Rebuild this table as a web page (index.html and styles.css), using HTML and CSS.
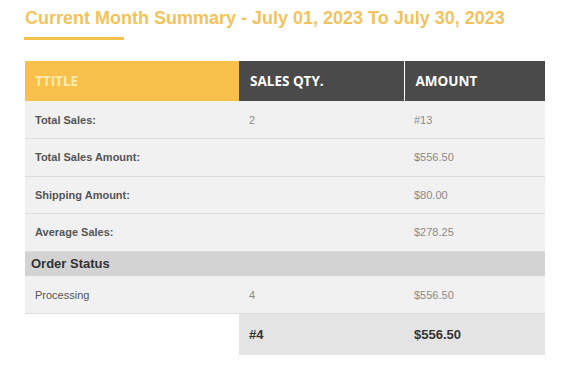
FILE: index.html
```html
<!DOCTYPE html>
<html>
<head>
<meta charset="utf-8">
<link rel="stylesheet" href="styles.css">
</head>
<body>
<div class="wrap">
  <h2 class="title">Current Month Summary - July 01, 2023 To July 30, 2023</h2>
  <div class="underline"></div>
  <table class="summary">
    <thead>
      <tr>
        <th class="c1 th-title">TTITLE</th>
        <th class="c2">SALES QTY.</th>
        <th class="c3 th-amount">AMOUNT</th>
      </tr>
    </thead>
    <tbody>
      <tr class="row"><td class="label">Total Sales:</td><td class="val">2</td><td class="val">#13</td></tr>
      <tr class="row"><td class="label">Total Sales Amount:</td><td class="val"></td><td class="val">$556.50</td></tr>
      <tr class="row"><td class="label">Shipping Amount:</td><td class="val"></td><td class="val">$80.00</td></tr>
      <tr class="row"><td class="label">Average Sales:</td><td class="val"></td><td class="val">$278.25</td></tr>
      <tr class="status"><td colspan="3">Order Status</td></tr>
      <tr class="row"><td class="label normal">Processing</td><td class="val">4</td><td class="val">$556.50</td></tr>
      <tr class="total"><td class="blank"></td><td class="tot">#4</td><td class="tot">$556.50</td></tr>
    </tbody>
  </table>
</div>
</body>
</html>
```
FILE: styles.css
```css
html, body {
  margin: 0;
  padding: 0;
  background: #ffffff;
}
body {
  font-family: "Liberation Sans", Arial, sans-serif;
}
.wrap {
  padding: 7px 23px 0 25px;
}
.title {
  margin: 0;
  font-size: 18px;
  line-height: 22px;
  font-weight: bold;
  color: #f2c35c;
}
.underline {
  width: 100px;
  height: 3px;
  background: #f4c24a;
  margin: 8px 0 21px -1px;
}
.summary {
  border-collapse: collapse;
  width: 520px;
  table-layout: fixed;
}
.c1 { width: 214px; }
.c2 { width: 165px; }
.c3 { width: 141px; }
th {
  height: 40px;
  padding: 0 0 0 11px;
  text-align: left;
  font-family: "Open Sans", sans-serif;
  font-size: 13.5px;
  font-weight: bold;
  color: #ffffff;
  background: #4a4a4a;
  box-sizing: border-box;
}
.th-title {
  background: #f9c14b;
  color: #fcebb0;
  padding-left: 10px;
}
.th-amount {
  border-left: 1px solid #ffffff;
}
td {
  padding: 0 0 0 10px;
  font-size: 11px;
  box-sizing: border-box;
}
.row td {
  height: 37.5px;
  background: #f1f1f1;
  border-bottom: 1px solid #dcdcdc;
}
.label {
  font-weight: bold;
  color: #555555;
}
.label.normal {
  font-weight: normal;
  color: #555555;
}
.val {
  color: #8a8a8a;
}
.status td {
  height: 25px;
  background: #d3d3d3;
  padding-left: 6px;
  font-size: 13px;
  font-weight: bold;
  color: #333333;
}
.total td {
  height: 41px;
}
.total .blank {
  background: #ffffff;
}
.total .tot {
  background: #e4e4e4;
  font-size: 13px;
  font-weight: bold;
  color: #333333;
}
```
